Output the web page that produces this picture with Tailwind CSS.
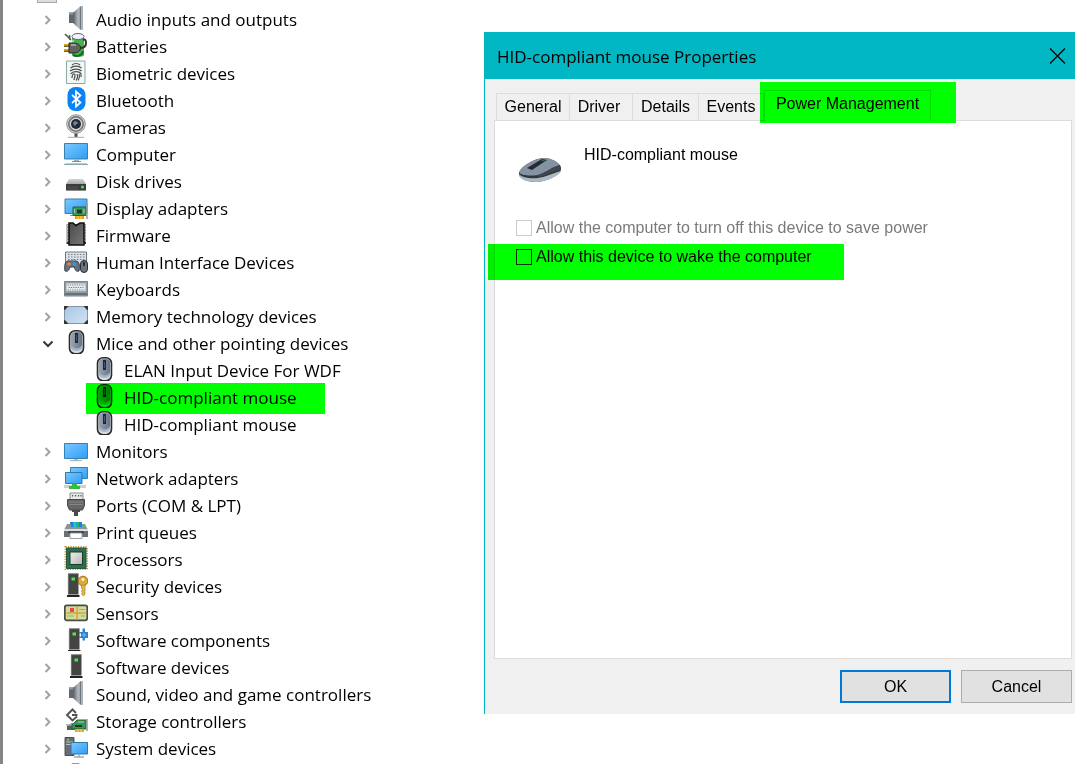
<!DOCTYPE html>
<html lang="en">
<head>
  <meta charset="UTF-8">
  <meta name="viewport" content="width=device-width, initial-scale=1.0">
  <title>Device Manager</title>
  <script src="https://cdn.jsdelivr.net/npm/@tailwindcss/browser@4"></script>
</head>
<body class="bg-white text-black font-['Open_Sans',sans-serif]">

  <!-- Icon sprites -->
  <svg class="absolute size-0" aria-hidden="true">
    <defs>
      <linearGradient id="g-metal" x1="0" x2="1"><stop offset="0" stop-color="#565d64"/><stop offset=".5" stop-color="#b3b9be"/><stop offset="1" stop-color="#858d94"/></linearGradient>
      <linearGradient id="g-screen" x1="0" y1="0" x2="1" y2="1"><stop offset="0" stop-color="#7cc8ff"/><stop offset="1" stop-color="#2e9df5"/></linearGradient>
      <linearGradient id="g-mouse" x1="0" x2="1"><stop offset="0" stop-color="#97a5b5"/><stop offset="1" stop-color="#65748a"/></linearGradient>
      <linearGradient id="g-disk" x1="0" y1="0" x2="0" y2="1"><stop offset="0" stop-color="#d5d5d5"/><stop offset="1" stop-color="#a8a8a8"/></linearGradient>
      <linearGradient id="g-chip" x1="0" y1="0" x2="1" y2="1"><stop offset="0" stop-color="#4a4a4a"/><stop offset="1" stop-color="#777"/></linearGradient>
      <linearGradient id="g-mem" x1="0" y1="0" x2="1" y2="1"><stop offset="0" stop-color="#a9c6e2"/><stop offset="1" stop-color="#cfe3f5"/></linearGradient>
      <linearGradient id="g-cpu" x1="0" y1="0" x2="1" y2="1"><stop offset="0" stop-color="#efefef"/><stop offset="1" stop-color="#b4b4b4"/></linearGradient>
    </defs>
    <symbol id="i-right" viewBox="0 0 10 10"><path d="M2.500 1l4 4-4 4" fill="none" stroke="#a2a2a2" stroke-width="2"/></symbol>
    <symbol id="i-down" viewBox="0 0 10 10"><path d="M.5 2.500l4.500 4.500 4.500-4.500" fill="none" stroke="#3b3b3b" stroke-width="2"/></symbol>
    <symbol id="i-speaker" viewBox="0 0 24 24">
      <path d="M5 6.500h5v10.500H5z" fill="#5f6870"/><path d="M5 6.500h5v2H5z" fill="#8f979f"/>
      <path d="M9 7l7.500-7H19v24h-2.500L9 17z" fill="url(#g-metal)"/>
      <path d="M16.500 1v22" stroke="#6d757c"/><path d="M18 0v24" stroke="#b9bfc4" stroke-width="1.500"/>
    </symbol>
    <symbol id="i-battery" viewBox="0 0 24 24">
      <path d="M8 4c0-5 12-5 12 0v18c0 2.500-12 2.500-12 0z" fill="#43b449"/>
      <path d="M9 7v13" stroke="#8fe58f" stroke-width="2"/>
      <ellipse cx="14" cy="3.500" rx="6" ry="3" fill="#f4f2ff" stroke="#6a6685"/>
      <path d="M1 1l6 6M5.500 2l.5 5" stroke="#555" stroke-width="1.500"/>
      <path d="M0 12h6M0 17h6" stroke="#e5a700" stroke-width="2"/>
      <path d="M0 13.300h6M0 18.300h6" stroke="#493a12"/>
      <path d="M5 10h4c5 0 7 2 8 5-1 3-3 5-8 5H5z" fill="#626262" stroke="#262626"/>
      <path d="M7 12h5" stroke="#b5b5b5" stroke-width="1.500"/>
      <path d="M16 15c4 0 6-2 6-5s-1-4-3-3" fill="none" stroke="#333" stroke-width="2"/>
      <path d="M9 22c4 2 9 1 10-4" fill="none" stroke="#1f642a" stroke-width="2"/>
    </symbol>
    <symbol id="i-finger" viewBox="0 0 24 24">
      <path d="M2.500 1h18.500v22.500H2.500z" fill="#f2f8f6" stroke="#86a9a1"/>
      <g fill="none" stroke="#4c4f50" stroke-width="1.200"><path d="M8 5c2-2 6-2 8 0M6.500 8c3-2.500 8-2.500 11 0M6 11c3-2.500 9-2.500 11.500 0M6.500 14c2-3 9-3.500 10.500 0v3M8 18c0-5 3-5 3-2.500 0 2-1 3.500-1 4.500M13 14c1 2 0 5-1 6.500M15.200 14c.8 3 0 5-1 6.500"/></g>
    </symbol>
    <symbol id="i-bluetooth" viewBox="0 0 24 24">
      <rect x="3.500" width="18" height="24" rx="8" fill="#0a84f5"/>
      <path d="M8 8l8.500 7.500-4.500 4V4.500l4.500 4L8 16" fill="none" stroke="#fff" stroke-width="1.700"/>
    </symbol>
    <symbol id="i-camera" viewBox="0 0 24 24">
      <path d="M10.500 18h3v5h-3z" fill="#4d4d4d"/><path d="M4 23.500h16" stroke="#b8b8b8" stroke-width="1.500"/>
      <circle cx="12" cy="10" r="9.300" fill="#d6d6d6" stroke="#8f8f8f"/>
      <circle cx="12" cy="10" r="7.200" fill="none" stroke="#707070" stroke-width="1.500"/>
      <circle cx="12" cy="10" r="5" fill="#272c33"/><circle cx="11.500" cy="9.500" r="2.300" fill="#5b89b5"/><circle cx="13" cy="11" r="1" fill="#111"/>
    </symbol>
    <symbol id="i-computer" viewBox="0 0 24 24">
      <path d="M.5 2.500h23v15.500H.5z" fill="url(#g-screen)" stroke="#3b7fab"/>
      <path d="M10 18.500h5v1.500h-5z" fill="#9fb1bf"/><path d="M8 20.500h9" stroke="#7e8f9c"/>
      <path d="M2 22h20l2 1.500H0z" fill="#b6cbdb"/><path d="M0 23.500h24" stroke="#8da4b5"/>
    </symbol>
    <symbol id="i-disk" viewBox="0 0 24 24">
      <path d="M5 11h14l3 5H2z" fill="url(#g-disk)"/><path d="M2 16h20v6.500H2z" fill="#3d3d3d"/>
      <path d="M3 19h11M3 21h11" stroke="#555"/><path d="M2 22.500h20" stroke="#8b8b8b"/><circle cx="18.500" cy="19" r="1.500" fill="#3bf04b"/>
    </symbol>
    <symbol id="i-display" viewBox="0 0 24 24">
      <path d="M1 4h22v14.500H1z" fill="url(#g-screen)" stroke="#3b7fab"/><path d="M6 20.500h5" stroke="#8798a5"/>
      <path d="M9 12h13v8.500H9z" fill="#3f9b5c" stroke="#24633a"/><path d="M13 14.500h5v4h-5z" fill="#1e3b29"/><path d="M10.500 14v4M20 14v4" stroke="#9fd1a9"/>
      <path d="M11 21h9v3.500h-9z" fill="#f0a20c"/><path d="M14 21v3M17 21v3" stroke="#fbd468"/><path d="M23 8v16" stroke="#9b9b9b" stroke-width="1.500"/>
    </symbol>
    <symbol id="i-chip" viewBox="0 0 24 24">
      <path d="M2.500 3.500h19.500M2.500 6.500h19.500M2.500 9.500h19.500M2.500 12.500h19.500M2.500 15.500h19.500M2.500 18.500h19.500M2.500 21h19.500" stroke="#333" stroke-width="2"/>
      <path d="M2.500 3.500H6M2.500 6.500H6M2.500 9.500H6M2.500 12.500H6M2.500 15.500H6M2.500 18.500H6M19 3.500h3M19 6.500h3M19 9.500h3M19 12.500h3M19 15.500h3M19 18.500h3" stroke="#c4c4c4"/>
      <path d="M5 1h4l3 2.500L16 1h4v22H5z" fill="url(#g-chip)" stroke="#111" stroke-width="1.500"/>
    </symbol>
    <symbol id="i-hid" viewBox="0 0 24 24">
      <path d="M1.500 3h21v13h-21z" fill="#dce1e5" stroke="#6d7a84"/><path d="M4 5.500h17M4 8h17M4 10.500h17" stroke="#747d84" stroke-dasharray="1.500 1.500"/>
      <path d="M1 22c-1-5 0-10 3-10h8c3 0 4 5 3 10-2 1-4 0-4.500-4H6c-1 4-3 5-5 4z" fill="#68727d" stroke="#39414a"/>
      <circle cx="5" cy="15" r="1.800" fill="#f08030"/><circle cx="10.500" cy="15" r="1.800" fill="#2c9af0"/><path d="M7 11.500h3" stroke="#36a1f5" stroke-width="2"/>
      <rect x="16.500" y="11.500" width="7" height="12" rx="3.500" fill="#6a7581" stroke="#2b2f33"/><path d="M20 13v4" stroke="#1b1b1b" stroke-width="1.500"/>
    </symbol>
    <symbol id="i-keyboard" viewBox="0 0 24 24">
      <path d="M.5 5.500h23v14.500H.5z" fill="#93a0a9" stroke="#77848c"/><path d="M2.500 7.500h19v7.500h-19z" fill="#e8ecef"/>
      <path d="M3.500 9h17M4.500 11.500h15M3.500 14h17" stroke="#76838b" stroke-width="1.200" stroke-dasharray="1.300 1"/><path d="M1 18h22" stroke="#65717a" stroke-width="2"/>
    </symbol>
    <symbol id="i-memory" viewBox="0 0 24 24">
      <rect x=".5" y="3.500" width="23" height="17" rx="1.500" fill="url(#g-mem)" stroke="#8296a8"/>
      <path d="M0 3h4.500L1.500 6.500 0 7zM24 3h-4.500l3 3.500L24 7zM0 21h4.500l-3-3.500L0 17zM24 21h-4.500l3-3.500L24 17z" fill="#343434"/>
    </symbol>
    <symbol id="i-mouse" viewBox="0 0 24 24">
      <rect x="5.500" y=".8" width="14" height="23" rx="5.500" fill="#d4dbe2" stroke="#2b2b2b" stroke-width="1.600"/>
      <rect x="7" y="2" width="11" height="18" rx="4" fill="url(#g-mouse)"/>
      <path d="M7 15c2 4.500 9 4.500 11 0v3c-2 4-9 4-11 0z" fill="#a9b5c2"/>
      <path d="M12.500 3v10" stroke="#24282d" stroke-width="3"/><path d="M12.500 5v6" stroke="#4d565f"/>
    </symbol>
    <symbol id="i-monitor" viewBox="0 0 24 24">
      <path d="M.5 5.500h23v15H.5z" fill="url(#g-screen)" stroke="#3482b3"/><path d="M10 21h4v1.500h-4z" fill="#b0bac2"/><path d="M6 22.700h12" stroke="#9fabb5"/>
    </symbol>
    <symbol id="i-network" viewBox="0 0 24 24">
      <path d="M6.500 2.500h17v11h-17z" fill="url(#g-screen)" stroke="#3482b3"/>
      <path d="M1.500 7.500H18v11H1.500z" fill="url(#g-screen)" stroke="#2f79aa"/>
      <path d="M0 21.500h22" stroke="#cfcfcf" stroke-width="3"/><path d="M8 18.500h5v2.500h3v3H5v-3h3z" fill="#35bb3d"/>
    </symbol>
    <symbol id="i-port" viewBox="0 0 24 24">
      <path d="M6 1h13v7H6z" fill="#e9e9e9" stroke="#8c8c8c"/><path d="M8.500 3v1.500M11.500 3v1.500M14.500 3v1.500M17 3v1.500" stroke="#555" stroke-width="1.200"/>
      <path d="M3.500 7.500h17v6l-2 4.500h-13l-2-4.500z" fill="#666" stroke="#484848"/><path d="M5 10h14M5 12.500h14" stroke="#858585"/><path d="M8 18h8v2h-2v4h-4v-4H8z" fill="#4a4a4a"/>
    </symbol>
    <symbol id="i-printer" viewBox="0 0 24 24">
      <path d="M6 3h12v6H6z" fill="#1d7fe5"/><path d="M9.500 3h3v6h-3z" fill="#25c5d0"/><path d="M13 3h2v6h-2z" fill="#28b84a"/>
      <path d="M3 5h4v3h11V5h3l3 6H0z" fill="#8d9399"/><path d="M0 10h24v8H0z" fill="#6b7177"/><path d="M0 11h24" stroke="#dcdfe1" stroke-width="2"/>
      <path d="M4.500 12.500h15v2h-15z" fill="#24272a"/><path d="M6 14h12v5.500H6z" fill="#fff" stroke="#9ba1a6"/><path d="M21 6.500v1.500" stroke="#36df49" stroke-width="2"/>
    </symbol>
    <symbol id="i-cpu" viewBox="0 0 24 24">
      <path d="M1.500 1h21.500v22.500H1.500z" fill="none" stroke="#c39a3b" stroke-width="2" stroke-dasharray="1.200 1.300"/>
      <path d="M2.500 2h19.500v20.500H2.500z" fill="#2f6c4c" stroke="#255a3e"/><path d="M6 6h12.500v12.500H6z" fill="url(#g-cpu)" stroke="#163d28"/>
    </symbol>
    <symbol id="i-tower" viewBox="0 0 24 24">
      <path d="M7 .5h10.500v21H7z" fill="#444"/><path d="M7 .7h10.500M7.300 1v20" stroke="#8d8d8d" stroke-width=".8"/>
      <path d="M6 22h12.500v2H6z" fill="#222"/><path d="M7 21.500h10" stroke="#999" stroke-width=".8"/><path d="M10.500 4.500h3.500v3h-3.500z" fill="#46ee42"/>
    </symbol>
    <symbol id="i-security" viewBox="0 0 24 24">
      <use href="#i-tower" x="-3" width="24" height="24"/>
      <circle cx="19" cy="8" r="4.800" fill="#dba93c" stroke="#a47615"/><circle cx="19" cy="6.500" r="1.500" fill="#fff3c8"/>
      <path d="M17.500 12h3.500v9l-1.500 2-2-2 1-1.500-1-1.500 1-1.500-1-1z" fill="#e3b54d" stroke="#ad8020" stroke-width=".7"/>
    </symbol>
    <symbol id="i-sensor" viewBox="0 0 24 24">
      <rect x=".8" y="5.300" width="22.500" height="15" rx="2" fill="#cfdc9a" stroke="#4a4a47" stroke-width="1.800"/>
      <path d="M2.500 13h19M13 6v14" stroke="#dba03a" stroke-width="1.500"/><path d="M3 16h7M15 9.500h6M17 16h4" stroke="#93b667"/><path d="M6 8h4v4H6z" fill="#e5494b"/>
    </symbol>
    <symbol id="i-component" viewBox="0 0 24 24">
      <use href="#i-tower" x="-2" y="1" width="24" height="24"/>
      <path d="M15 5h3.500V1.500H21V5h3v6h-3v2.500h-2.500V11H15V9.500h2v-3h-2z" fill="#2d83cd"/><path d="M18 8h4M20 6v4" stroke="#74bbf0"/>
    </symbol>
    <symbol id="i-storage" viewBox="0 0 24 24">
      <path d="M3 18l5-3 5 3v4H3z" fill="#5c5c5c"/><path d="M2 17h7" stroke="#aaa" stroke-width="1.500"/>
      <path d="M12 5L8.500 1.500 3 7l5.500 5.500L13 8.500M8 7h5.500" fill="none" stroke="#555" stroke-width="2"/>
      <path d="M8 17l5-5h9v9H8z" fill="#3a9357" stroke="#23613a"/><path d="M11 17h7v2h-7z" fill="#1d3325"/><path d="M14 14h6" stroke="#a5d9ae"/>
      <path d="M11 21h9v3h-9z" fill="#f0a20c"/><path d="M14 21v3M17 21v3" stroke="#fbd468"/><path d="M23 11v12" stroke="#999" stroke-width="1.500"/>
    </symbol>
    <symbol id="i-system" viewBox="0 0 24 24">
      <path d="M1 2.500h9v18H1z" fill="#686d71" stroke="#4d5053"/><path d="M2 7h7M2 9.500h5" stroke="#bfc4c7"/><path d="M3 4h2v1.500H3z" fill="#4ff04a"/>
      <path d="M7 7.500h16.500V19H7z" fill="url(#g-screen)" stroke="#2f79aa"/><path d="M15 19.500v2M10 22h10" stroke="#9faab2" stroke-width="1.500"/>
    </symbol>
    <symbol id="i-usb" viewBox="0 0 24 24"><path d="M8 1.500h7V9H8z" fill="#ddd" stroke="#8c9ba8"/></symbol>
  </svg>

  <main class="flex h-screen items-start overflow-hidden">

    <!-- Device tree -->
    <nav class="h-full w-[484px] flex-none border-l-3 border-[#858585] text-[17px] leading-[27px] whitespace-nowrap" aria-label="Devices">
      <div class="mb-[3px] ml-[34px] h-[3px] w-5 border-x border-b border-[#a8a8a8] bg-[#dedede]"></div>
      <ul id="tree"></ul>
    </nav>

    <!-- Properties dialog -->
    <section class="mt-8 flex-1 border-l border-[#00b7c3] bg-[#f0f0f0] font-['Liberation_Sans',sans-serif] text-base leading-5" role="dialog" aria-labelledby="title">
      <header class="flex h-[47px] items-center justify-between bg-[#00b7c3] pr-[7px] pl-3">
        <h1 id="title" class="pt-0.5 font-['Open_Sans',sans-serif] text-[17px]">HID-compliant mouse Properties</h1>
        <button class="size-5" aria-label="Close">
          <svg class="size-5" viewBox="0 0 20 20"><path d="M2 2.500l15 15M17 2.500l-15 15" fill="none" stroke="#000" stroke-width="1.200"/></svg>
        </button>
      </header>

      <div class="pt-[11px] pr-[3px] pb-[11px] pl-[9px]">
        <div class="relative z-10 -mb-px flex items-end pl-0.5" role="tablist">
          <button class="h-7 w-[74px] border border-[#dcdcdc]" role="tab">General</button>
          <button class="-ml-px h-7 w-16 border border-[#dcdcdc] pr-1" role="tab">Driver</button>
          <button class="-ml-px h-7 w-[67px] border border-[#dcdcdc]" role="tab">Details</button>
          <button class="-ml-px h-7 w-[66px] border border-[#dcdcdc]" role="tab">Events</button>
          <div class="relative">
            <button class="block h-[31px] w-[167px] border border-b-0 border-[#dcdcdc] bg-white pb-1" role="tab" aria-selected="true">Power Management</button>
            <div class="pointer-events-none absolute -top-2 -left-1 h-[41px] w-[196px] bg-[#00ff00] mix-blend-multiply"></div>
          </div>
        </div>

        <div class="min-h-[539px] border border-[#dcdcdc] bg-white pt-6 pl-[21px]" role="tabpanel">
          <div class="flex gap-5">
            <svg class="mt-2 h-8 w-12" viewBox="0 0 48 32">
              <path d="M3 20C5 13 19 5 29 5c9 1 16 6 16 11 0 6-16 13-25 13C10 29 2 25 3 20z" fill="#30383e"/>
              <path d="M3 21c3 4 13 5 19 4 7-1 13-4 23-7-1 5-16 11-25 11C10 29 3 26 3 21z" fill="#aeb8c2"/>
              <path d="M3 19C6 12 20 5 29 5c7 0 11 4 15 7-5 1-15 8-22 10-8 1-17 1-19-3z" fill="#8492a3"/>
              <path d="M22 22c7-2 15-9 22-10 1 2 1 4 0 5-7 1-14 6-22 7z" fill="#3f474e"/>
              <path d="M11 15L26 6l5 1-15 10z" fill="#242b31"/><path d="M25 7l4 1" stroke="#3a6a55"/>
            </svg>
            <h2>HID-compliant mouse</h2>
          </div>

          <label class="mt-7 flex h-[29px] items-center gap-1 text-[#7a7a7a]">
            <input type="checkbox" disabled class="size-4 appearance-none border border-[#cccccc] bg-white">
            Allow the computer to turn off this device to save power
          </label>
          <div class="relative">
            <label class="flex h-[29px] items-center gap-1">
              <input type="checkbox" class="size-4 appearance-none border border-[#333333] bg-white">
              Allow this device to wake the computer
            </label>
            <div class="pointer-events-none absolute top-0.5 -left-7 h-9 w-[356px] bg-[#00ff00] mix-blend-multiply"></div>
          </div>
        </div>

        <div class="mt-[11px] flex justify-end gap-2.5">
          <button class="h-[33px] w-[111px] border-2 border-[#0078d7] bg-[#e1e1e1]">OK</button>
          <button class="h-[33px] w-[111px] border border-[#adadad] bg-[#e1e1e1]">Cancel</button>
        </div>
      </div>
    </section>
  </main>

  <script>
    // [icon, label, level, state]
    var devices = [
      ['speaker', 'Audio inputs and outputs'],
      ['battery', 'Batteries'],
      ['finger', 'Biometric devices'],
      ['bluetooth', 'Bluetooth'],
      ['camera', 'Cameras'],
      ['computer', 'Computer'],
      ['disk', 'Disk drives'],
      ['display', 'Display adapters'],
      ['chip', 'Firmware'],
      ['hid', 'Human Interface Devices'],
      ['keyboard', 'Keyboards'],
      ['memory', 'Memory technology devices'],
      ['mouse', 'Mice and other pointing devices', 0, 'open'],
      ['mouse', 'ELAN Input Device For WDF', 1],
      ['mouse', 'HID-compliant mouse', 1, 'marked'],
      ['mouse', 'HID-compliant mouse', 1],
      ['monitor', 'Monitors'],
      ['network', 'Network adapters'],
      ['port', 'Ports (COM & LPT)'],
      ['printer', 'Print queues'],
      ['cpu', 'Processors'],
      ['security', 'Security devices'],
      ['sensor', 'Sensors'],
      ['component', 'Software components'],
      ['tower', 'Software devices'],
      ['speaker', 'Sound, video and game controllers'],
      ['storage', 'Storage controllers'],
      ['system', 'System devices'],
      ['usb', '']
    ];

    document.getElementById('tree').innerHTML = devices.map(function (d) {
      var icon = '<svg class="size-6 flex-none"><use href="#i-' + d[0] + '"/></svg>';
      var label = '<span>' + d[1].replace('&', '&amp;') + '</span>';
      if (d[2]) {
        var mark = d[3] === 'marked' ? '<div class="pointer-events-none absolute -top-px left-[83px] h-[31px] w-[239px] bg-[#00ff00] mix-blend-multiply"></div>' : '';
        return '<li class="relative flex h-[27px] gap-2 pl-[89px]">' + icon + label + mark + '</li>';
      }
      var arrow = d[3] === 'open' ? 'down' : 'right';
      var button = d[1] ? '<button class="mr-1.5 flex h-[27px] w-5 items-center justify-center" aria-label="Toggle ' + d[1].replace('&', '&amp;') + '"><svg class="size-2.5"><use href="#i-' + arrow + '"/></svg></button>' : '<span class="mr-1.5 w-5"></span>';
      return '<li class="flex h-[27px] pl-[35px]">' + button + icon + '<span class="w-2"></span>' + label + '</li>';
    }).join('');
  </script>
</body>
</html>
